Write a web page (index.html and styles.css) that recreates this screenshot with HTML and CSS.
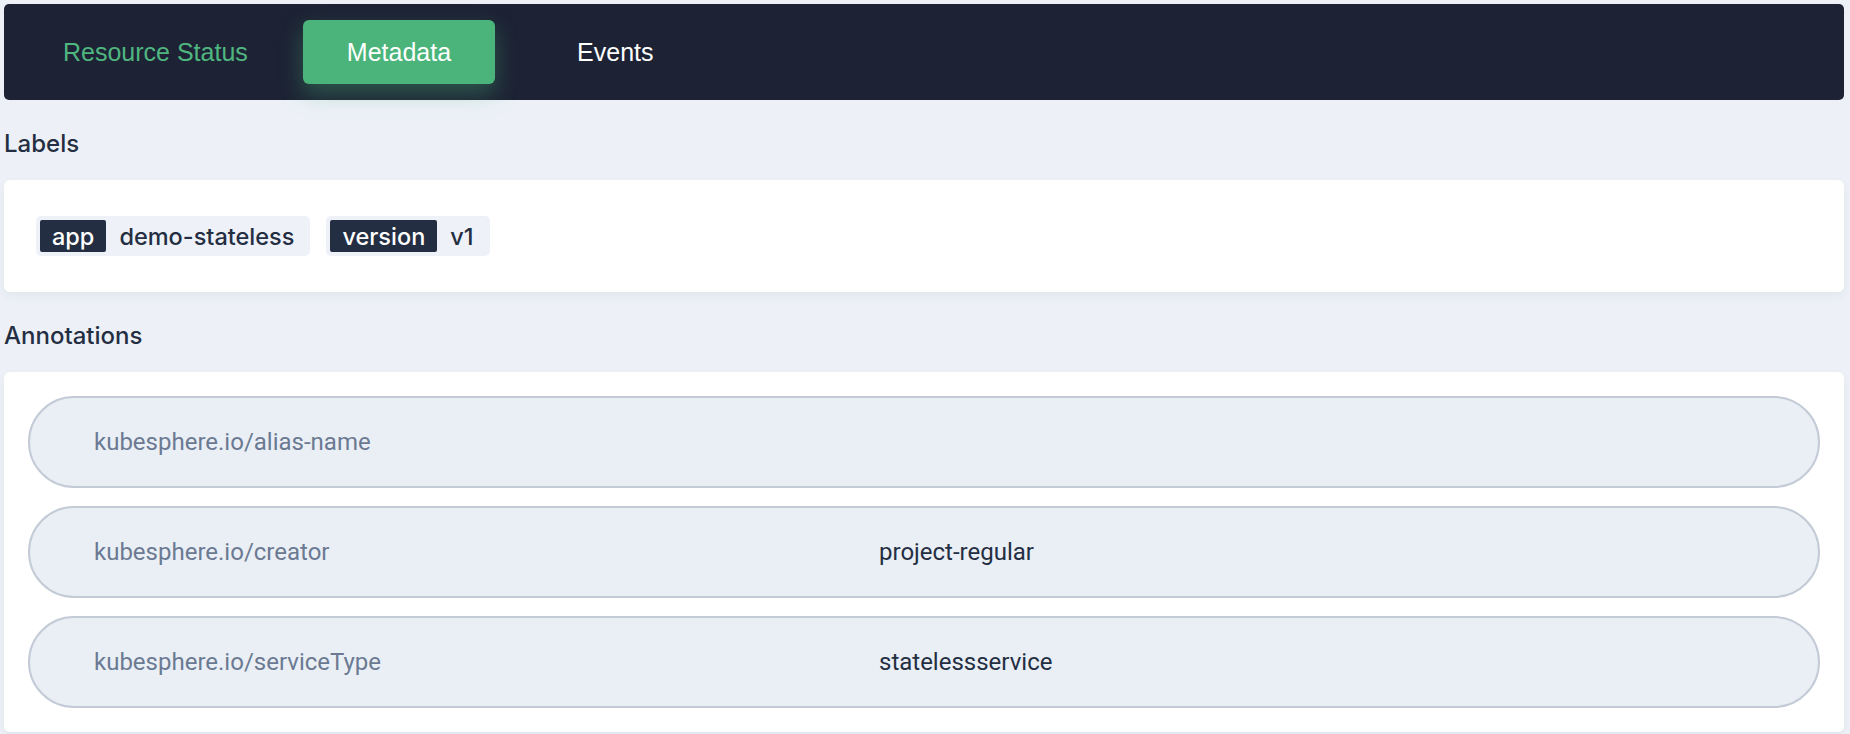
FILE: index.html
```html
<!DOCTYPE html>
<html lang="en">
<head>
<meta charset="utf-8">
<title>Metadata</title>
<link rel="stylesheet" href="styles.css">
</head>
<body>
<div class="page">
  <nav class="tabs">
    <a class="tab tab-status">Resource Status</a>
    <a class="tab tab-active">Metadata</a>
    <a class="tab tab-events">Events</a>
  </nav>

  <h2 class="section-title">Labels</h2>
  <section class="card labels-card">
    <span class="tag"><span class="tag-key">app</span><span class="tag-value">demo-stateless</span></span>
    <span class="tag"><span class="tag-key">version</span><span class="tag-value">v1</span></span>
  </section>

  <h2 class="section-title">Annotations</h2>
  <section class="card annotations-card">
    <div class="row"><span class="row-key">kubesphere.io/alias-name</span><span class="row-value"></span></div>
    <div class="row"><span class="row-key">kubesphere.io/creator</span><span class="row-value">project-regular</span></div>
    <div class="row"><span class="row-key">kubesphere.io/serviceType</span><span class="row-value">statelessservice</span></div>
  </section>
</div>
</body>
</html>
```

FILE: styles.css
```css
* { box-sizing: border-box; }

html, body {
  margin: 0;
  padding: 0;
  background: #edf1f7;
  height: 100%;
  overflow: hidden;
}

body {
  font-family: "Liberation Sans", Arial, sans-serif;
  color: #242e42;
}

.page {
  padding: 4px 6px 0 4px;
}

.tabs {
  display: flex;
  align-items: center;
  height: 96px;
  padding: 0 0 0 20px;
  gap: 13px;
  background: #1d2334;
  border-radius: 5px;
}

.tab {
  display: flex;
  align-items: center;
  height: 64px;
  padding: 0 42px;
  font-size: 25px;
  color: #ffffff;
  border-radius: 6px;
  cursor: pointer;
}

.tab-status { color: #4fb680; padding-left: 39px; }

.tab-active {
  padding: 0 44px;
  background: #4ab47a;
  color: #ffffff;
  box-shadow: 0 10px 22px rgba(74, 180, 122, 0.35);
}

.tab-events { margin-left: 27px; }

.section-title {
  margin: 0;
  height: 80px;
  padding-top: 29px;
  line-height: 30px;
  font-family: Inter, "Liberation Sans", sans-serif;
  font-size: 24px;
  font-weight: 500;
  color: #242e42;
}

.card {
  background: #ffffff;
  border-radius: 6px;
  box-shadow: 0 4px 10px rgba(36, 46, 66, 0.06);
}

.labels-card {
  display: flex;
  gap: 16px;
  padding: 36px 32px;
}

.tag {
  display: inline-flex;
  align-items: center;
  height: 40px;
  padding: 4px;
  background: #eef2f8;
  border-radius: 5px;
  font-family: Inter, "Liberation Sans", sans-serif;
  font-size: 23.5px;
  font-weight: 500;
}

.tag-key {
  display: flex;
  align-items: center;
  height: 32px;
  padding: 0 12px;
  background: #242e42;
  color: #ffffff;
  border-radius: 2px;
}

.tag-value {
  padding: 0 12px 0 13px;
  color: #242e42;
}

.annotations-card {
  display: flex;
  flex-direction: column;
  gap: 18px;
  padding: 24px 24px;
}

.row {
  display: grid;
  grid-template-columns: 785px 1fr;
  align-items: center;
  height: 92px;
  padding: 0 64px;
  background: #eaeff6;
  border: 2px solid #c3cbd7;
  border-radius: 46px;
  font-family: Roboto, "Liberation Sans", sans-serif;
  font-size: 24px;
}

.row-key { color: #6b7a92; }

.row-value { color: #242e42; }
```
